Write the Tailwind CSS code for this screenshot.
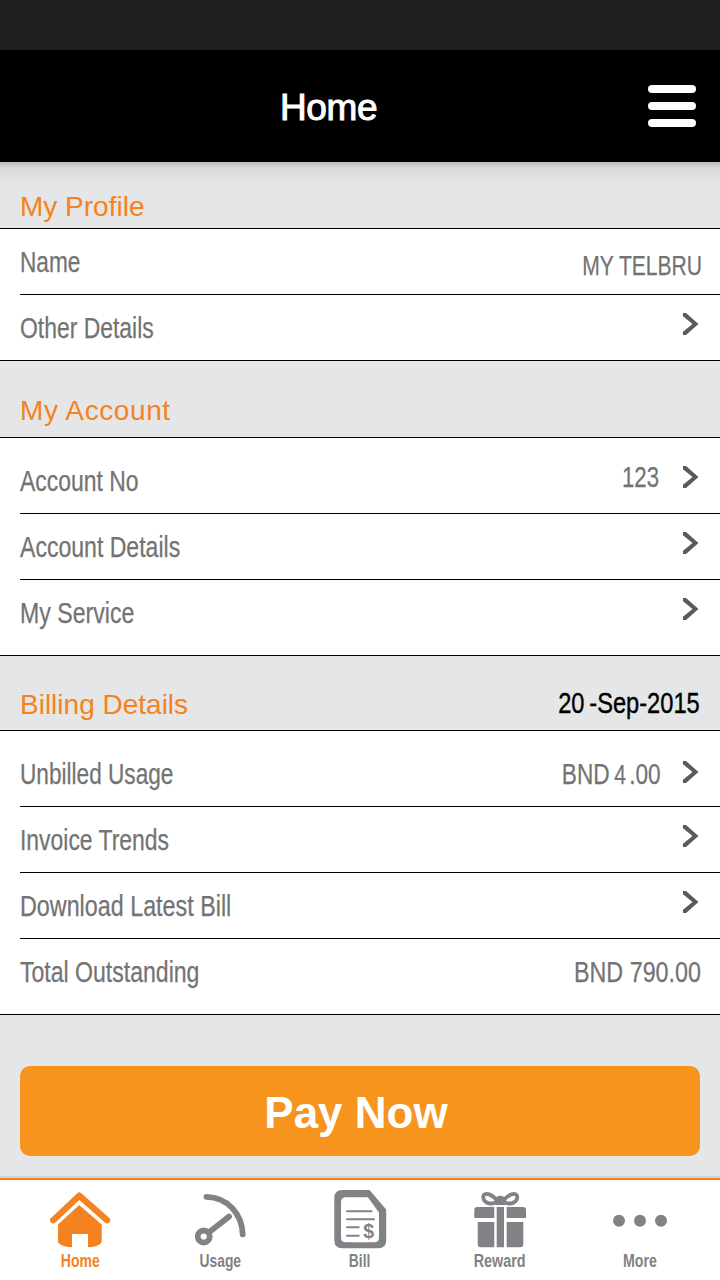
<!DOCTYPE html>
<html lang="en">
<head>
  <meta charset="UTF-8">
  <meta name="viewport" content="width=device-width, initial-scale=1.0">
  <title>Home</title>
  <script src="https://cdn.jsdelivr.net/npm/@tailwindcss/browser@4"></script>
</head>
<body class="bg-[#e5e6e8] font-['Liberation_Sans',Arial,sans-serif]">
  <!-- Shared chevron -->
  <svg class="hidden">
    <symbol id="chevron" viewBox="0 0 16 22">
      <path d="M0 0H3L15.5 11L3 22H0V18.8L9.5 11L0 3.2Z" fill="#5a5a5a"/>
    </symbol>
  </svg>

  <div class="w-[720px] h-[1280px] flex flex-col overflow-hidden">
    <div class="h-[50px] shrink-0 bg-[#1f1f1f]"></div>

    <header class="h-28 shrink-0 bg-black flex items-start justify-between pl-[280px] pr-6">
      <h1 class="mt-[38px] text-[37px] leading-10 tracking-[-0.4px] text-white [-webkit-text-stroke:1px_white]">Home</h1>
      <button class="mt-[35px] w-12 flex flex-col gap-[9.5px]">
        <span class="h-[7.6px] rounded-full bg-white"></span>
        <span class="h-[7.6px] rounded-full bg-white"></span>
        <span class="h-[7.6px] rounded-full bg-white"></span>
      </button>
    </header>

    <main class="flex-1 flex flex-col">
      <!-- My Profile -->
      <div class="h-[66px] px-5 pb-[3px] flex items-end bg-linear-to-b from-[#bbbcbe] via-[#dadbdd] via-10% to-[#e5e6e8] to-35%">
        <h2 class="text-[28px] leading-9 text-[#f58220]">My Profile</h2>
      </div>
      <section class="bg-white border-y border-black pl-5 text-[29px] leading-[66px] text-[#737373] whitespace-nowrap [-webkit-text-stroke:0.25px_#737373]">
        <div class="h-[66px] border-b border-black flex justify-between pr-[18px]">
          <span class="origin-left scale-x-[.78]">Name</span>
          <span class="pt-[3px] text-[28.5px] leading-[66px] origin-right scale-x-[.74]">MY TELBRU</span>
        </div>
        <div class="h-[65px] flex justify-between pr-[21px]">
          <span class="origin-left scale-x-[.79]">Other Details</span>
          <svg class="mt-[18px] w-4 h-[22px]"><use href="#chevron"/></svg>
        </div>
      </section>

      <!-- My Account -->
      <div class="h-[76px] px-5 pb-2 flex items-end">
        <h2 class="text-[28px] leading-9 tracking-[0.6px] text-[#f58220]">My Account</h2>
      </div>
      <section class="bg-white border-y border-black pl-5 text-[29px] leading-[66px] text-[#737373] whitespace-nowrap [-webkit-text-stroke:0.25px_#737373]">
        <div class="h-[76px] pt-2.5 border-b border-black flex pr-[21px]">
          <span class="origin-left scale-x-[.79]">Account No</span>
          <span class="-mt-1 ml-auto mr-6 text-[30px] origin-right scale-x-[.74]">123</span>
          <svg class="mt-[18px] w-4 h-[22px]"><use href="#chevron"/></svg>
        </div>
        <div class="h-[66px] border-b border-black flex justify-between pr-[21px]">
          <span class="origin-left scale-x-[.795]">Account Details</span>
          <svg class="mt-[18px] w-4 h-[22px]"><use href="#chevron"/></svg>
        </div>
        <div class="h-[75px] flex justify-between pr-[21px]">
          <span class="origin-left scale-x-[.797]">My Service</span>
          <svg class="mt-[18px] w-4 h-[22px]"><use href="#chevron"/></svg>
        </div>
      </section>

      <!-- Billing Details -->
      <div class="h-[74px] pl-5 pr-5 pb-[7px] flex items-end justify-between">
        <h2 class="text-[28px] leading-9 text-[#f58220]">Billing Details</h2>
        <p class="mb-0.5 text-[29px] leading-9 text-black whitespace-nowrap origin-right scale-x-[.815] [-webkit-text-stroke:0.4px_black]"><span class="mr-1.5">20</span>-Sep-2015</p>
      </div>
      <section class="bg-white border-y border-black pl-5 text-[29px] leading-[66px] text-[#737373] whitespace-nowrap [-webkit-text-stroke:0.25px_#737373]">
        <div class="h-[76px] pt-2.5 border-b border-black flex pr-[21px]">
          <span class="origin-left scale-x-[.78]">Unbilled Usage</span>
          <span class="ml-auto mr-[22px] origin-right scale-x-[.78]">BND<span class="text-[27px] ml-1.5 mr-1">4</span>.00</span>
          <svg class="mt-5 w-4 h-[22px]"><use href="#chevron"/></svg>
        </div>
        <div class="h-[66px] border-b border-black flex justify-between pr-[21px]">
          <span class="origin-left scale-x-[.79]">Invoice Trends</span>
          <svg class="mt-[18px] w-4 h-[22px]"><use href="#chevron"/></svg>
        </div>
        <div class="h-[66px] border-b border-black flex justify-between pr-[21px]">
          <span class="origin-left scale-x-[.804]">Download Latest Bill</span>
          <svg class="mt-[18px] w-4 h-[22px]"><use href="#chevron"/></svg>
        </div>
        <div class="h-[75px] flex justify-between pr-[19px]">
          <span class="origin-left scale-x-[.795]">Total Outstanding</span>
          <span class="origin-right scale-x-[.804]">BND 790.00</span>
        </div>
      </section>

      <button class="mt-[51px] mx-5 h-[90px] rounded-[10px] bg-[#f7941e] text-white text-[44px] leading-[50px] font-bold pt-1 pr-2">Pay Now</button>
    </main>

    <nav class="h-[104px] shrink-0 border-t-2 border-[#d3d4d8] bg-white text-[#808285] text-[17.5px] leading-5 font-bold">
      <div class="h-full border-t-2 border-[#f58220] px-2.5 pt-2 flex">
        <a class="flex-1 flex flex-col items-center text-[#f58220]">
          <svg class="w-16 h-[63px]" viewBox="0 0 64 63" fill="none">
            <path d="M5.3 32.2L31.2 7.7L59 32.2" stroke="currentColor" stroke-width="6.4" stroke-linecap="round" stroke-linejoin="round"/>
            <path d="M31.2 17L10 36.6V54.5Q15 59.3 24 59.3V46H40V59.3Q49 59.3 53.7 54.5V36.6Z" fill="currentColor"/>
          </svg>
          <span class="scale-x-[.8]">Home</span>
        </a>
        <a class="flex-1 flex flex-col items-center">
          <svg class="w-16 h-[63px]" viewBox="0 0 64 63" fill="none" stroke="currentColor" stroke-width="5.8" stroke-linecap="round">
            <path d="M18.5 8.9C40 9.5 54 26 54.7 46.3"/>
            <path d="M41 28.6L22 43.5"/>
            <circle cx="15.7" cy="48.5" r="6"/>
          </svg>
          <span class="scale-x-[.79]">Usage</span>
        </a>
        <a class="flex-1 flex flex-col items-center">
          <svg class="w-16 h-[63px]" viewBox="0 0 64 63" fill="currentColor">
            <path fill-rule="evenodd" d="M14.3 2H41.5L58.2 21.5V52.3Q58.2 60.3 50.2 60.3H14.3Q6.3 60.3 6.3 52.3V10Q6.3 2 14.3 2ZM18 9.3Q13 9.3 13 14.3V49.5Q13 54.2 18 54.2H46.5Q51 54.2 51 49.5V24.5L39.8 9.3Z"/>
            <path d="M19 23.3H43.5M19 31.3H46M19 39.2H30.7M19 47.7H30.7" stroke="currentColor" stroke-width="2" stroke-linecap="round"/>
            <text x="35.2" y="49.5" font-size="19.5" font-weight="bold">$</text>
          </svg>
          <span class="scale-x-[.79]">Bill</span>
        </a>
        <a class="flex-1 flex flex-col items-center">
          <svg class="w-16 h-[63px]" viewBox="0 0 64 63" fill="currentColor">
            <path d="M26.3 19V30H6.3V22Q6.3 19 9.3 19ZM38.7 19V30H58V22Q58 19 55 19ZM28.7 19H36V59.3H28.7ZM9.7 34H26.3V59.3H12.7Q9.7 59.3 9.7 56.3ZM38.7 34H55.3V56.3Q55.3 59.3 52.3 59.3H38.7Z"/>
            <path d="M29 13C25 6.5 18 4.5 15.9 7C14 10 16.5 14.5 21 15.3C25 15.9 28 15 29 13ZM35.5 13C39.5 6.5 46.5 4.5 48.6 7C50.5 10 48 14.5 43.5 15.3C39.5 15.9 36.5 15 35.5 13Z" fill="none" stroke="currentColor" stroke-width="3.8"/>
            <path d="M27.5 17V11Q28.5 7.7 32.2 7.7Q36 7.7 37 11V17Z"/>
          </svg>
          <span class="scale-x-[.82]">Reward</span>
        </a>
        <a class="flex-1 flex flex-col items-center">
          <svg class="w-16 h-[63px]" viewBox="0 0 64 63" fill="currentColor">
            <circle cx="11" cy="32.7" r="6"/>
            <circle cx="32" cy="32.7" r="6"/>
            <circle cx="53" cy="32.7" r="6"/>
          </svg>
          <span class="scale-x-[.81]">More</span>
        </a>
      </div>
    </nav>
  </div>
</body>
</html>
